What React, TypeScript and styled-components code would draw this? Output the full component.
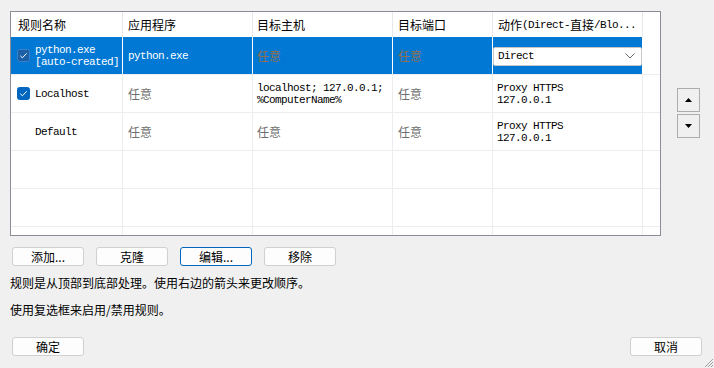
import styled, { createGlobalStyle } from 'styled-components'

const cjk = `"Noto Sans CJK SC", "Microsoft YaHei", sans-serif`
const mono = `"Liberation Mono", "Noto Sans CJK SC", monospace`

const GlobalStyle = createGlobalStyle`
  html, body {
    margin: 0;
    padding: 0;
    background: #f0f0f0;
  }
  * {
    box-sizing: border-box;
  }
`

const Page = styled.div`
  position: relative;
  width: 714px;
  height: 368px;
  padding: 11px 12px 0 10px;
  display: flex;
  flex-direction: column;
  background: #f0f0f0;
  font-family: ${cjk};
  font-size: 12px;
  color: #000;
  overflow: hidden;
`

const TopRow = styled.div`
  display: flex;
  align-items: flex-start;
`

const Table = styled.div`
  width: 651px;
  height: 225px;
  border: 1px solid #8c8c96;
  background: #fff;
  overflow: hidden;
`

const Row = styled.div<{ $header?: boolean }>`
  display: grid;
  grid-template-columns: 112px 130px 140px 100px 150px 1fr;
  height: ${(p) => (p.$header ? '25px' : '38px')};
  border-bottom: ${(p) => (p.$header ? 'none' : '1px solid #ededed')};
`

const Cell = styled.div<{ $selected?: boolean; $pad?: number; $header?: boolean; $last?: boolean }>`
  display: flex;
  align-items: center;
  padding-left: ${(p) => p.$pad ?? 5}px;
  border-right: ${(p) =>
    p.$last ? 'none' : p.$selected ? '1px solid #ffffff' : `1px solid ${p.$header ? '#e8e8e8' : '#ededed'}`};
  background: ${(p) => (p.$selected ? '#0078d4' : '#fff')};
  color: ${(p) => (p.$selected ? '#fff' : '#000')};
  white-space: nowrap;
  overflow: hidden;
`

const Latin = styled.span`
  font-family: ${mono};
  font-size: 11px;
  letter-spacing: -0.6px;
  line-height: 12px;
`

const Mono = styled.div`
  font-family: ${mono};
  font-size: 11px;
  letter-spacing: -0.6px;
  line-height: 12px;
`

const Any = styled.span<{ $selected?: boolean }>`
  color: ${(p) => (p.$selected ? '#93704f' : '#6e6e6e')};
`

const CheckSlot = styled.div`
  width: 13px;
  height: 13px;
  margin-right: 5px;
  flex: none;
`

const Select = styled.div`
  width: 100%;
  height: 19px;
  margin-top: 1px;
  display: flex;
  align-items: center;
  justify-content: space-between;
  padding: 0 6px 0 4px;
  background: #fff;
  border: 1px solid #c6c6c6;
  border-radius: 2px;
  color: #000;
`

const Side = styled.div`
  margin-left: 16px;
  padding-top: 77px;
  display: flex;
  flex-direction: column;
  gap: 2px;
`

const ArrowButton = styled.button`
  width: 23px;
  height: 24px;
  padding: 0;
  display: flex;
  align-items: center;
  justify-content: center;
  background: #f0f0f0;
  border: 1px solid #adadad;
  border-radius: 0;
`

const ButtonRow = styled.div`
  display: flex;
  gap: 12px;
  margin-top: 11px;
  padding-left: 2px;
`

const Button = styled.button<{ $focused?: boolean }>`
  width: 72px;
  height: 19px;
  padding: 0;
  font-family: ${cjk};
  font-size: 12px;
  line-height: 17px;
  color: #000;
  background: #fdfdfd;
  border: 1px solid ${(p) => (p.$focused ? '#0067c0' : '#d0d0d0')};
  border-radius: 3px;
`

const Info = styled.p`
  margin: 0;
  line-height: 16px;
  font-size: 12px;
`

const InfoBlock = styled.div`
  display: flex;
  flex-direction: column;
  gap: 11px;
  margin-top: 9px;
`

const Footer = styled.div`
  display: flex;
  justify-content: space-between;
  margin-top: 19px;
  padding-left: 2px;
`

const Grip = styled.svg`
  position: absolute;
  right: 0;
  bottom: 0;
`

const Checkbox = ({ selected }: { selected?: boolean }) => (
  <svg width='13' height='13' viewBox='0 0 13 13' style={{ flex: 'none', marginRight: 5 }}>
    <rect x='0.5' y='0.5' width='12' height='12' rx='2' fill={selected ? '#1b5fa6' : '#0067c0'} stroke={selected ? '#3d7fc4' : '#0067c0'} />
    <path d='M3.3 6.8 L5.4 8.8 L9.7 4.3' fill='none' stroke='#fff' strokeWidth='1' />
  </svg>
)

const Chevron = () => (
  <svg width='10' height='6' viewBox='0 0 10 6'>
    <path d='M0.5 0.5 L5 5 L9.5 0.5' fill='none' stroke='#6a6a6a' strokeWidth='1' />
  </svg>
)

const Triangle = ({ up }: { up?: boolean }) => (
  <svg width='7' height='4' viewBox='0 0 7 4'>
    <path d={up ? 'M0 4 L3.5 0 L7 4 Z' : 'M0 0 L7 0 L3.5 4 Z'} fill='#000' />
  </svg>
)

type Rule = {
  name: string[]
  checked?: boolean
  app: string | null
  host: string[] | null
  port: string | null
  action: string[]
}

const rules: Rule[] = [
  { name: ['python.exe', '[auto-created]'], checked: true, app: 'python.exe', host: null, port: null, action: ['Direct'] },
  { name: ['Localhost'], checked: true, app: null, host: ['localhost; 127.0.0.1;', '%ComputerName%'], port: null, action: ['Proxy HTTPS', '127.0.0.1'] },
  { name: ['Default'], app: null, host: null, port: null, action: ['Proxy HTTPS', '127.0.0.1'] },
]

const MonoLines = ({ lines }: { lines: string[] }) => (
  <Mono>
    {lines.map((l) => (
      <div key={l}>{l}</div>
    ))}
  </Mono>
)

export default function App() {
  return (
    <Page>
      <GlobalStyle />
      <TopRow>
        <Table>
          <Row $header>
            <Cell $header $pad={7}>规则名称</Cell>
            <Cell $header>应用程序</Cell>
            <Cell $header $pad={4}>目标主机</Cell>
            <Cell $header>目标端口</Cell>
            <Cell $header>
              动作<Latin>(Direct-</Latin>直接<Latin>/Blo...</Latin>
            </Cell>
            <Cell $header $last />
          </Row>

          {rules.map((rule, i) => {
            const sel = i === 0
            return (
              <Row key={rule.name[0]}>
                <Cell $selected={sel} $pad={6}>
                  {rule.checked ? <Checkbox selected={sel} /> : <CheckSlot />}
                  <MonoLines lines={rule.name} />
                </Cell>
                <Cell $selected={sel}>
                  {rule.app ? <MonoLines lines={[rule.app]} /> : <Any $selected={sel}>任意</Any>}
                </Cell>
                <Cell $selected={sel} $pad={4}>
                  {rule.host ? <MonoLines lines={rule.host} /> : <Any $selected={sel}>任意</Any>}
                </Cell>
                <Cell $selected={sel}>
                  {rule.port ? <MonoLines lines={[rule.port]} /> : <Any $selected={sel}>任意</Any>}
                </Cell>
                <Cell $selected={sel} $pad={sel ? 0 : 4}>
                  {sel ? (
                    <Select>
                      <Mono>{rule.action[0]}</Mono>
                      <Chevron />
                    </Select>
                  ) : (
                    <MonoLines lines={rule.action} />
                  )}
                </Cell>
                <Cell $last />
              </Row>
            )
          })}

          {[0, 1, 2].map((n) => (
            <Row key={n}>
              <Cell />
              <Cell />
              <Cell />
              <Cell />
              <Cell />
              <Cell $last />
            </Row>
          ))}
        </Table>

        <Side>
          <ArrowButton>
            <Triangle up />
          </ArrowButton>
          <ArrowButton>
            <Triangle />
          </ArrowButton>
        </Side>
      </TopRow>

      <ButtonRow>
        <Button>添加...</Button>
        <Button>克隆</Button>
        <Button $focused>编辑...</Button>
        <Button>移除</Button>
      </ButtonRow>

      <InfoBlock>
        <Info>规则是从顶部到底部处理。使用右边的箭头来更改顺序。</Info>
        <Info>使用复选框来启用/禁用规则。</Info>
      </InfoBlock>

      <Footer>
        <Button>确定</Button>
        <Button>取消</Button>
      </Footer>

      <Grip width='12' height='12' viewBox='0 0 12 12'>
        <path d='M11 3 L3 11 M11 6 L6 11 M11 9 L9 11' stroke='#a0a0a0' strokeWidth='1' />
      </Grip>
    </Page>
  )
}
